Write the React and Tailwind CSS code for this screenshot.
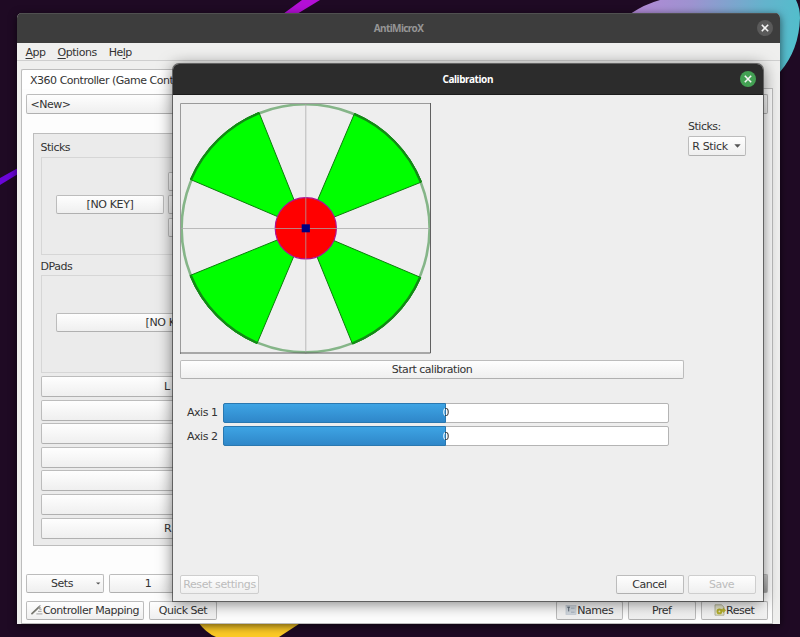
import React from "react";

const BTN =
  "flex shrink-0 items-center justify-center overflow-hidden whitespace-nowrap rounded-[2px] border border-[#bcbcbc] border-b-[#b0b0b0] bg-linear-to-b from-[#fefefe] to-[#efefef] leading-none";

function Button({ className = "", children }) {
  return <div className={`${BTN} ${className}`}>{children}</div>;
}

function Wallpaper() {
  return (
    <svg className="absolute inset-0" width="800" height="637" viewBox="0 0 800 637">
      <defs>
        <linearGradient id="planet" x1="630" y1="0" x2="800" y2="40" gradientUnits="userSpaceOnUse">
          <stop offset="0" stopColor="#b487d6" />
          <stop offset="0.35" stopColor="#9d93d0" />
          <stop offset="0.75" stopColor="#64b3cc" />
          <stop offset="1" stopColor="#50bfcc" />
        </linearGradient>
      </defs>
      <rect width="800" height="637" fill="#1f0a24" />
      <path d="M283 14 L302 0 H320 L297 14 Z" fill="#b40fd6" />
      <path d="M0 178 L18 168 V174 L0 185 Z" fill="#6a06d8" />
      <path d="M630 14 Q645 4 660 0 H796 Q800 8 800 18 Q799 50 780 72 H770 V14 Z" fill="url(#planet)" />
      <path d="M198 622 Q206 633 216 637 H279 L302 622 Z" fill="#fbc926" />
    </svg>
  );
}

function CloseButton({ className }) {
  return (
    <div className={`flex size-[16px] items-center justify-center rounded-full ${className}`}>
      <svg width="8" height="8" viewBox="0 0 8 8" stroke="#f4f4f4" strokeWidth="1.6" fill="none">
        <path d="M.8 .8 L7.2 7.2 M7.2 .8 L.8 7.2" />
      </svg>
    </div>
  );
}

function WrenchIcon() {
  return (
    <svg className="shrink-0" width="12" height="12" viewBox="0 0 12 12">
      <path d="M1 9.6 L7.6 3.4" stroke="#77776f" strokeWidth="1.8" strokeLinecap="round" />
      <path d="M7 3.6 L9.4 1.4 M8 4.6 L9.6 3.4" stroke="#8b8b88" strokeWidth="1.2" />
      <path d="M5.4 9.8 H11.4 M7 7.4 H10.6 M8.4 5.4 H10.6" stroke="#b0b0b0" strokeWidth="1.2" />
    </svg>
  );
}

function NamesIcon() {
  return (
    <svg className="shrink-0" width="12" height="12" viewBox="0 0 12 12">
      <rect x="1" y="1.5" width="10" height="9" fill="#d3dae1" stroke="#c6ced6" strokeWidth="0.8" />
      <path d="M2.2 3.2 H5 M3.7 3 V7.4" stroke="#5e6b78" strokeWidth="1" fill="none" />
      <path d="M6 4.2 H9.6 M6 8.2 H9.6" stroke="#a2adb8" strokeWidth="0.9" />
    </svg>
  );
}

function ResetIcon() {
  return (
    <svg className="shrink-0" width="12" height="12" viewBox="0 0 12 12">
      <path d="M1 .8 H7.5 L10 3.2 V11.2 H1 Z" fill="#e6e6cd" stroke="#a9a98d" strokeWidth="0.8" />
      <circle cx="5.4" cy="7.4" r="1.9" fill="none" stroke="#b5b02a" strokeWidth="1.9" />
      <path d="M7.4 9 V5.2 H9.2 V3.8 L11.8 6.3 L9.4 8.8 V7.4 H8.4" fill="#bdb72b" stroke="#a8a32a" strokeWidth="0.4" />
    </svg>
  );
}

function MainWindow() {
  return (
    <div className="absolute left-[17px] top-[12.5px] flex h-[611.5px] w-[763px] flex-col overflow-hidden rounded-t-[5px] bg-[#efefee] shadow-[0_2px_8px_rgba(0,0,0,0.6)]">
      <div className="relative flex h-[30.5px] shrink-0 items-center justify-center border-t border-[#505050] bg-[#3d3d3d] font-['Noto_Sans',sans-serif] text-[10px] font-bold tracking-[-0.6px] text-[#959595]">
        AntiMicroX
        <CloseButton className="absolute right-[7.5px] top-[6.5px] bg-[#5a5a5a]" />
      </div>
      <div className="flex h-[18px] shrink-0 items-center gap-[12px] border-b border-[#cfcfcf] pl-[8.5px] pt-[1px] leading-none">
        <span><u className="underline-offset-2">A</u>pp</span>
        <span><u className="underline-offset-2">O</u>ptions</span>
        <span>He<u className="underline-offset-2">l</u>p</span>
      </div>
      <div className="mt-[8px] flex grow flex-col pl-[4px] pr-[7px]">
        <div className="flex h-[20px] shrink-0">
          <div className="w-[240px] rounded-t-[2px] border-l border-t border-[#bdbdbd] bg-white pl-[8px] pt-[4px] leading-[13px] whitespace-nowrap">
            X360 Controller (Game Controller)
          </div>
          <div className="grow border-b border-[#bdbdbd]" />
        </div>
        <div className="flex grow flex-col border-x border-b border-[#bdbdbd] bg-[#fdfdfd] px-[4px]">
          <Button className="mt-[5px] h-[20px] !justify-start pl-[3.5px]">&lt;New&gt;</Button>
          <div className="ml-[7px] mr-[7px] mt-[19px] flex h-[413px] shrink-0 flex-col border border-[#bdbdbd] bg-[#ebebeb] px-[6.5px]">
            <div className="mt-[7px] h-[16px] leading-[14px]">Sticks</div>
            <div className="flex h-[98px] shrink-0 items-start border border-[#d6d6d6] pl-[14.5px]">
              <Button className="mt-[37px] h-[19px] w-[108px] tracking-[-0.35px]">[NO KEY]</Button>
              <div className="ml-[4px] mt-[14px] flex flex-col gap-[4px]">
                <Button className="h-[19px] w-[100px]" />
                <Button className="h-[19px] w-[100px]" />
                <Button className="h-[19px] w-[100px]" />
              </div>
            </div>
            <div className="mt-[4px] h-[16px] leading-[15px]">DPads</div>
            <div className="flex h-[98px] shrink-0 items-start border border-[#d6d6d6] pl-[14.5px]">
              <Button className="mt-[37px] h-[19px] w-[226px] tracking-[-0.35px]">[NO KEY]</Button>
            </div>
            <div className="mt-[3px] flex flex-col gap-[2.6px]">
              {["L", "", "", "", "", "", "R"].map((label, i) => (
                <Button key={i} className="h-[21px] w-[300px] !justify-start pl-[122.5px]">{label}</Button>
              ))}
            </div>
          </div>
          <div className="mt-[27.5px] flex h-[19px] gap-[5px]">
            <Button className="w-[78px]">
              <span className="w-[67px] pl-[2px] pr-[3px] text-center">Sets</span>
              <svg width="5" height="3" viewBox="0 0 5 3"><path d="M0 .5 H4.4 L2.2 2.5Z" fill="#555" /></svg>
            </Button>
            <Button className="w-[78px]">1</Button>
            <div className="grow" />
            <Button className="w-[78px] !from-[#d0d0d0] !to-[#a4a4a4]" />
          </div>
          <div className="mt-[8px] flex h-[19px]">
            <Button className="w-[118px]"><WrenchIcon />Controller Mapping</Button>
            <Button className="ml-[5px] w-[68px]">Quick Set</Button>
            <div className="grow" />
            <Button className="w-[67.5px]"><NamesIcon />Names</Button>
            <Button className="ml-[5px] w-[67.5px]">Pref</Button>
            <Button className="ml-[5px] w-[67.5px]"><ResetIcon />Reset</Button>
          </div>
        </div>
      </div>
    </div>
  );
}

function StickPlot() {
  return (
    <svg className="block" width="251" height="251" viewBox="0 0 251 251">
      <circle cx="125.6" cy="125.3" r="124" fill="none" stroke="#85b588" strokeWidth="2.6" />
      <g fill="#00ff00" stroke="#0b7d0b" strokeWidth="1">
        <path d="M125.5 125.5 L10.5 76.5 A124 124 0 0 1 79 9.5 Z" />
        <path d="M125.5 125.5 L174.5 10.5 A124 124 0 0 1 241.5 79 Z" />
        <path d="M125.5 125.5 L240.8 174.5 A124 124 0 0 1 172.5 241 Z" />
        <path d="M125.5 125.5 L77 240.5 A124 124 0 0 1 10 172.5 Z" />
      </g>
      <g fill="none" stroke="#128a15" strokeWidth="2.4">
        <path d="M11 76.5 A124 124 0 0 1 79 10.2" />
        <path d="M174.5 11.2 A124 124 0 0 1 240.8 79" />
        <path d="M240 174.5 A124 124 0 0 1 172.5 240.3" />
        <path d="M77 239.8 A124 124 0 0 1 10.8 172.5" />
      </g>
      <circle cx="125.8" cy="125.3" r="30.6" fill="#ff0000" stroke="#b01090" strokeWidth="1.2" />
      <path d="M0 125.5 H251 M125.8 0 V251" stroke="#a8a8a8" strokeOpacity="0.75" strokeWidth="1" />
      <rect x="121.7" y="121.3" width="8.2" height="8" fill="#000080" />
      <path d="M.5 251 V.5 H250" fill="none" stroke="#9a9a9a" />
      <path d="M250.5 0 V250 H0" fill="none" stroke="#606060" />
    </svg>
  );
}

function AxisBar({ label }) {
  return (
    <div className="flex h-[20px] items-center">
      <div className="w-[42.5px] pl-[7px] leading-none whitespace-nowrap">{label}</div>
      <div className="relative flex h-[20px] w-[446.5px] items-center justify-center rounded-[2px] border border-[#b4b4b4] bg-white leading-none">
        <div className="absolute -bottom-px -left-px -top-px w-[223px] rounded-l-[2px] border border-[#2a78b0] bg-linear-to-b from-[#3ea4e4] to-[#2f87c9]" />
        <span className="relative bg-linear-to-r from-white from-45% to-[#333333] to-45% bg-clip-text text-transparent">0</span>
      </div>
    </div>
  );
}

function CalibrationDialog() {
  return (
    <div className="absolute left-[172.5px] top-[63.5px] flex h-[537.5px] w-[590.5px] flex-col overflow-hidden rounded-t-[6px] bg-[#eeeeee] shadow-[0_0_0_1px_rgba(70,70,70,0.75),0_2px_16px_rgba(0,0,0,0.55)]">
      <div className="relative flex h-[31.5px] shrink-0 items-center justify-center border-b border-[#1c1c1c] bg-[#2c2c2c] pt-[1px] font-['Noto_Sans',sans-serif] text-[10px] font-bold tracking-[-0.4px] text-white">
        Calibration
        <CloseButton className="absolute right-[7.5px] top-[7.5px] bg-[#43a053]" />
      </div>
      <div className="flex grow flex-col px-[7.5px] pb-[7.5px] pt-[8px]">
        <div className="flex">
          <div className="w-[504px]">
            <StickPlot />
            <Button className="mt-[6px] h-[19px] w-[504px]">Start calibration</Button>
            <div className="mt-[23.5px] flex flex-col gap-[3.7px]">
              <AxisBar label="Axis 1" />
              <AxisBar label="Axis 2" />
            </div>
          </div>
          <div className="ml-[4px] pt-[17px]">
            <div className="h-[16px] leading-[13px]">Sticks:</div>
            <Button className="h-[20px] w-[58px] gap-[6px] pr-[1px] tracking-[-0.35px]">
              R Stick
              <svg width="7" height="4" viewBox="0 0 7 4"><path d="M.3 .3 H6.7 L3.5 3.8Z" fill="#555" /></svg>
            </Button>
          </div>
        </div>
        <div className="mt-auto flex h-[19px]">
          <Button className="w-[79px] !border-[#cecece] pt-[1px] tracking-[-0.4px] text-[#bcbcbc]">Reset settings</Button>
          <div className="grow" />
          <Button className="w-[68px] pt-[1px]">Cancel</Button>
          <Button className="ml-[4px] w-[68px] !border-[#cecece] pt-[1px] text-[#bcbcbc]">Save</Button>
        </div>
      </div>
    </div>
  );
}

export default function App() {
  return (
    <div className="relative h-[637px] w-[800px] overflow-hidden bg-[#1f0a24] font-['DejaVu_Sans',sans-serif] text-[11px] tracking-[-0.48px] text-[#333333]">
      <Wallpaper />
      <MainWindow />
      <CalibrationDialog />
    </div>
  );
}
